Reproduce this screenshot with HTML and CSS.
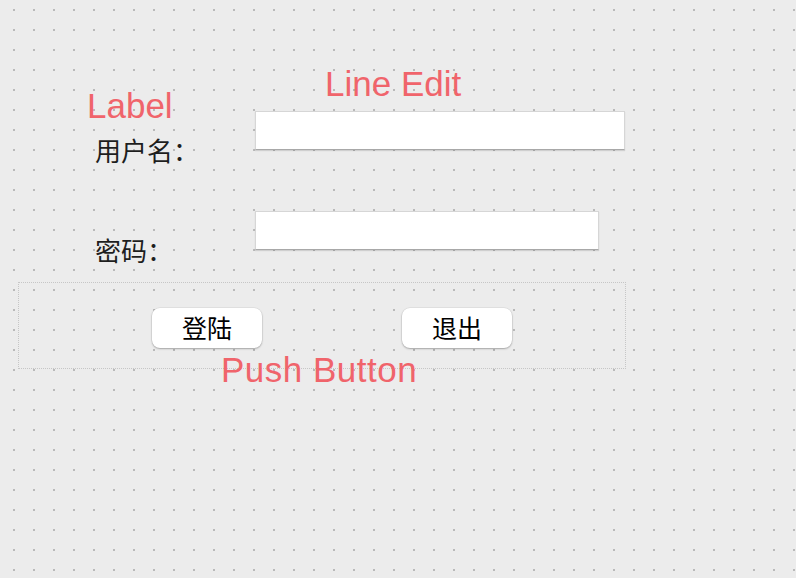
FILE: index.html
```html
<!DOCTYPE html>
<html lang="zh">
<head>
<meta charset="utf-8">
<title>Form</title>
<link rel="stylesheet" href="styles.css">
</head>
<body>
<div class="canvas">
  <div class="row row1">
    <div class="label">用户名：</div>
    <div class="input input-long"></div>
  </div>
  <div class="row row2">
    <div class="label">密码：</div>
    <div class="input input-short"></div>
  </div>
  <div class="buttonbox">
    <div class="button">登陆</div>
    <div class="button">退出</div>
  </div>
  <div class="note note-label">Label</div>
  <div class="note note-lineedit">Line Edit</div>
  <div class="note note-button">Push Button</div>
</div>
</body>
</html>
```
FILE: styles.css
```css
html, body {
  margin: 0;
  padding: 0;
  background: #ececec;
}
.canvas {
  position: relative;
  width: 796px;
  height: 578px;
  box-sizing: border-box;
  padding-top: 111px;
  overflow: hidden;
  background-color: #ececec;
  background-image: conic-gradient(at 2px 2px, transparent 75%, #b9b9b9 0);
  background-size: 20px 20px;
  background-position: 13px 9px;
  font-family: "Noto Sans CJK SC", "Liberation Sans", sans-serif;
}
.row {
  display: flex;
  align-items: flex-start;
  padding-left: 95px;
}
.row1 { height: 100px; }
.row2 { height: 71px; }
.label {
  width: 160px;
  padding-top: 23px;
  font-size: 26px;
  line-height: 32px;
  color: #1e1e1e;
}
.input {
  height: 39px;
  box-sizing: border-box;
  background: #fff;
  border: 1px solid #d6d6d6;
  border-bottom-color: #a8a8a8;
  box-shadow: 0 1px 1px rgba(0, 0, 0, 0.12);
}
.input-long { width: 370px; }
.input-short { width: 344px; }
.buttonbox {
  display: flex;
  gap: 140px;
  margin-left: 18px;
  width: 608px;
  height: 87px;
  box-sizing: border-box;
  padding: 25px 0 0 133px;
  border: 1px dotted #c6c6c6;
}
.button {
  width: 110px;
  height: 40px;
  box-sizing: border-box;
  padding-bottom: 3px;
  background: #fff;
  border-radius: 8px;
  box-shadow: 0 1px 2px rgba(0, 0, 0, 0.28), 0 0 0 0.5px rgba(0, 0, 0, 0.08);
  display: flex;
  align-items: center;
  justify-content: center;
  font-size: 25px;
  line-height: 30px;
  color: #000;
}
.note {
  position: absolute;
  font-family: "Liberation Sans", "Noto Sans", sans-serif;
  font-size: 35px;
  line-height: 40px;
  color: #f0646b;
  white-space: nowrap;
}
.note-label { left: 87px; top: 86px; }
.note-lineedit { left: 325px; top: 64px; }
.note-button { left: 221px; top: 350px; letter-spacing: 0.5px; }
```
